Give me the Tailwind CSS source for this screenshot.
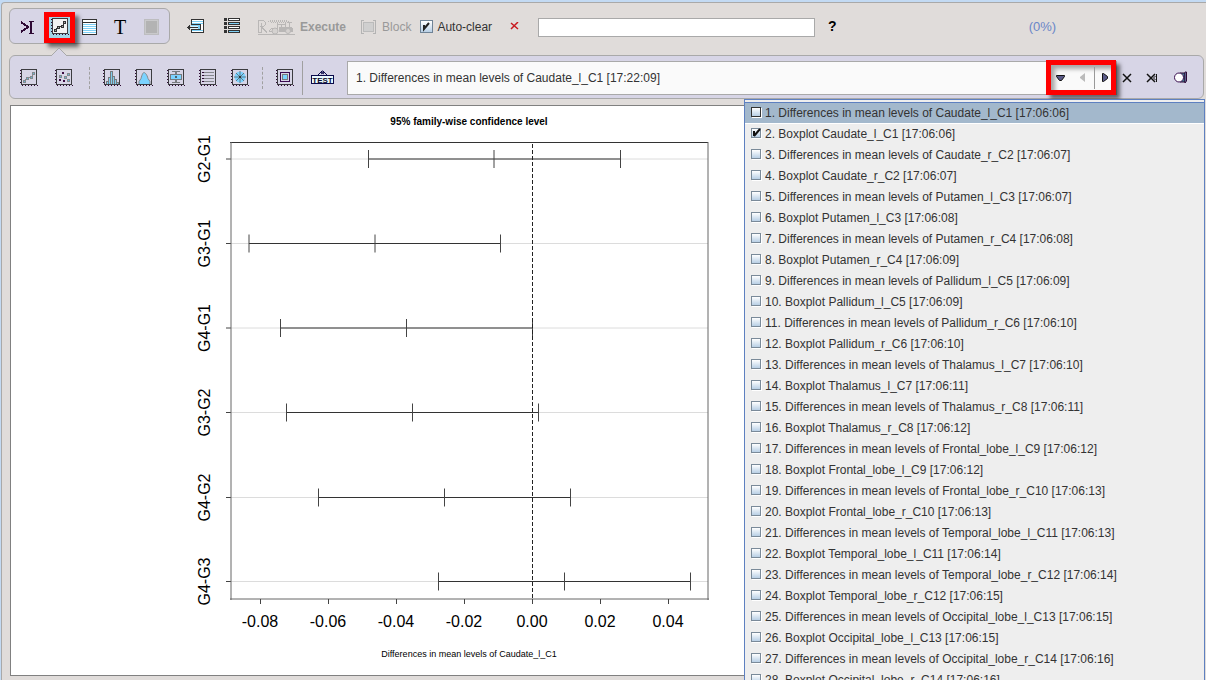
<!DOCTYPE html>
<html lang="en">
<head>
<meta charset="utf-8">
<title>Graphics viewer</title>
<script src="https://cdn.jsdelivr.net/npm/@tailwindcss/browser@4"></script>
</head>
<body class="overflow-hidden bg-[#c3daf3] font-['Liberation_Sans',Arial,sans-serif] text-xs text-[#333]">
<svg width="0" height="0" class="absolute" aria-hidden="true">
  <defs>
    <g id="frame" shape-rendering="crispEdges">
      <path d="M.5 1v15" stroke="#2f0a35" stroke-dasharray="1 2" fill="none"/>
      <path d="M2 16.500h16" stroke="#2f0a35" stroke-dasharray="1 2" fill="none"/>
      <rect x="1.500" y=".5" width="15" height="15" fill="none" stroke="#3c3c40"/>
    </g>
    <g id="steps" shape-rendering="crispEdges">
      <rect x="3.500" y="11.500" width="2" height="2"/><rect x="6.500" y="8.500" width="2" height="2"/>
      <rect x="10.500" y="7.500" width="2" height="2"/><rect x="12.500" y="3.500" width="2" height="2"/>
      <path d="M5 10.500h2M9 8.500h1M12.500 6v1" fill="none"/>
    </g>
  </defs>
</svg>

<div class="mt-[2px] ml-px min-h-[678px] overflow-hidden rounded-tl border-t border-l border-[#a9a9a9] bg-[#e0dcda] pt-[5px] pr-[2px] pl-[7px]">

  <header class="flex h-9 items-center">
    <div class="flex h-9 w-[161px] shrink-0 items-center rounded-md border border-[#a9a9a9] bg-[#d7d5e6] pt-[2px] pl-[10px]" role="toolbar" aria-label="Panels">
      <button class="w-4" aria-label="Console">
        <svg width="16" height="14" shape-rendering="crispEdges" fill="none" stroke="#2f0a35"><path d="M1 2l7 5l-7 5" stroke-width="2"/><path d="M9 1h5M9 13h5M11.500 1v12"/><path d="M11 1v12" stroke-width="2"/></svg>
      </button>
      <button class="relative ml-2 flex size-[31px] items-center justify-center border-[5px] border-[#f00] bg-[#a3d5e6] shadow-[4px_4px_4px_#0008]" aria-label="Graphics">
        <svg width="18" height="18" class="shrink-0"><rect x="2" y="1" width="14" height="14" fill="#f2f2f2"/><use href="#frame"/><use href="#steps" stroke="#333" fill="#aaa"/></svg>
      </button>
      <button class="ml-[7px]" aria-label="Table">
        <svg width="15" height="16" shape-rendering="crispEdges"><rect x=".5" y=".5" width="14" height="15" fill="#fff" stroke="#333"/><path d="M1 3.500h13" stroke="#333"/><path d="M1 5.500h13M1 7.500h13M1 9.500h13M1 11.500h13M1 13.500h13" stroke="#7fd0f5"/></svg>
      </button>
      <button class="ml-[15px] w-4 font-['Liberation_Serif',serif] text-xl leading-5 text-black" aria-label="Text">T</button>
      <button class="ml-4" aria-label="Stop" disabled>
        <svg width="15" height="16" shape-rendering="crispEdges"><rect x=".5" y=".5" width="14" height="15" fill="#c9c9cb" stroke="#bdbdbf"/><rect x="2" y="2" width="11" height="12" fill="#b3b3b3"/></svg>
      </button>
    </div>
    <button class="ml-[17px]" aria-label="Collapse">
      <svg width="17" height="14" shape-rendering="crispEdges"><rect x="4.500" y=".5" width="12" height="13" fill="#fff" stroke="#333"/><path d="M5 2.500h11M5 4.500h11M5 11.500h11" stroke="#7fd0f5"/><rect x="4" y="6" width="2" height="5" fill="#e0dcda"/><path d="M4 5.500h9v5H4" fill="#7fd0f5" stroke="#333"/><path d="M4 8.500h7" stroke="#e0f4ff" stroke-width="3"/><path d="M0 8.500h11M1.500 7v3M2.500 6v5" fill="none" stroke="#333"/></svg>
    </button>
    <button class="ml-5" aria-label="List">
      <svg width="16" height="16" shape-rendering="crispEdges"><path d="M0 1.500h3M0 5.500h3M0 9.500h3M0 13.500h3" stroke="#333" stroke-width="3"/><g stroke="#333"><rect x="4.500" y=".5" width="11" height="2" fill="#fff"/><rect x="4.500" y="4.500" width="11" height="2" fill="#7fd0f5"/><rect x="4.500" y="8.500" width="11" height="2" fill="#fff"/><rect x="4.500" y="12.500" width="11" height="2" fill="#7fd0f5"/></g></svg>
    </button>
    <button class="ml-[18px] flex items-center gap-[5px] pt-px text-xs font-bold text-[#999]" disabled>
      <svg width="37" height="16" fill="none" stroke="#b9b7b6" shape-rendering="crispEdges"><path d="M0 15.500h37"/><path d="M.5 13V1.500h5l2 2v2l-2 2H3l6 6M3 4v9H0"/><path d="M10 2.500h22M12 1.500h18M13 3.500h18" stroke-dasharray="1 1"/><path d="M19.500 4v5h-6l-2 3h3M27 4v4M20 5.500h7M23.500 5v3" /><path d="M21 8h12l2 2v3H21z" fill="#b9b7b6" stroke="none"/><g shape-rendering="auto"><circle cx="17" cy="12" r="3" fill="#d5d2d0"/><circle cx="30" cy="12" r="2.500" fill="#d5d2d0"/></g><path d="M31.500 4v4M30 3.500h4"/></svg>
      Execute
    </button>
    <button class="ml-[15px] flex items-center gap-[6px] pt-px text-xs text-[#999]" disabled>
      <svg width="15" height="14" shape-rendering="crispEdges"><rect x="2.500" y="2.500" width="10" height="9" fill="#cfcfcf" stroke="#bbb"/><path d="M3 .5H.5v13H3M12 .5h2.500v13H12" fill="none" stroke="#b3b3b3"/></svg>
      Block
    </button>
    <label class="ml-[9px] flex items-center gap-1 pt-px text-xs">
      <span class="relative flex size-[13px]">
        <input type="checkbox" checked class="size-[13px] appearance-none border border-[#6f8396] bg-linear-to-b from-white to-[#b8cfe5]">
        <svg class="pointer-events-none absolute inset-0" width="13" height="13"><path d="M4 5v4l5-6" fill="none" stroke="#222" stroke-width="2"/></svg>
      </span>
      Auto-clear
    </label>
    <button class="ml-[18px]" aria-label="Clear"><svg width="9" height="8"><path d="M1 1l7 6M8 0L1 7" stroke="#c8191e" stroke-width="1.500"/></svg></button>
    <input type="text" aria-label="Command" class="mt-[2px] ml-[19px] h-[19px] w-[277px] border border-[#a9a9a9] bg-white px-1">
    <button class="ml-[13px] text-sm font-bold text-black" aria-label="Help">?</button>
    <output class="ml-48 pt-[2px] text-[13px] text-[#6a86c8]">(0%)</output>
  </header>

  <div class="relative mt-[11px] flex h-11 items-center rounded-md border border-[#a9a9a9] bg-[#d7d5e6] pt-px pl-[10px]" role="toolbar" aria-label="Graphics">
    <svg class="absolute -top-[9px] left-10" width="18" height="10"><path d="M1 9L9 1l8 8" fill="#d7d5e6" stroke="#a9a9a9"/><path d="M2 9.500h14" stroke="#d7d5e6"/></svg>
    <button aria-label="Line plot"><svg width="18" height="18"><use href="#frame"/><use href="#steps" stroke="#85898d" fill="#65b9dc"/></svg></button>
    <button class="ml-[17px]" aria-label="Scatter plot"><svg width="18" height="18" shape-rendering="crispEdges"><use href="#frame"/><g fill="#65b9dc" stroke="#85898d"><rect x="4.500" y="6.500" width="2" height="2"/><rect x="9.500" y="7.500" width="2" height="2"/><rect x="12.500" y="4.500" width="2" height="2"/><rect x="12.500" y="10.500" width="2" height="2"/></g><path d="M7 3h2v2H7zM4 10h2v2H4zM8 11h2v2H8z" fill="#3a0a40"/></svg></button>
    <span class="ml-4 h-[22px] border-l border-dashed border-[#a0a0a0]"></span>
    <button class="ml-[13px]" aria-label="Histogram"><svg width="18" height="18" shape-rendering="crispEdges"><path d="M3.500 15v-3h2V8h2V2h2v5h2v3h2v3h2v2M5.500 15v-3M7.500 15V8M9.500 15V7M11.500 15v-5M13.500 15v-2" fill="#7fcdec" stroke="#777b7e"/><use href="#frame"/></svg></button>
    <button class="ml-[14px]" aria-label="Density plot"><svg width="18" height="18"><path d="M4 15.500v-3l2-3c1-4 2-6 3-6s3 2 4 6l2 3v3z" fill="#7bd3ff" stroke="#85898d"/><use href="#frame"/></svg></button>
    <button class="ml-[14px]" aria-label="Box plot"><svg width="18" height="18" shape-rendering="crispEdges"><use href="#frame"/><path d="M5 2.500h8M5 13.500h8M9 3v10" stroke="#777b7e" stroke-width="1.500"/><rect x="3.500" y="5.500" width="11" height="5" fill="#7bd3ff" stroke="#777b7e"/><rect x="8" y="7" width="2" height="2" fill="#4b6270"/></svg></button>
    <button class="ml-[14px]" aria-label="Dot chart"><svg width="18" height="18" shape-rendering="crispEdges"><use href="#frame"/><path d="M4 3.500h11M4 6.500h11M4 9.500h11M4 12.500h11" stroke="#85898d"/><path d="M3 3.500h2M3 6.500h2M3 9.500h2M3 12.500h2" stroke="#2f0a35"/></svg></button>
    <button class="ml-[14px]" aria-label="Star plot"><svg width="18" height="18"><circle cx="9" cy="8" r="5.500" fill="#7bd3ff"/><path d="M9 2v12M3 8h12M5 4l8 8M13 4l-8 8" stroke="#5d7a88"/><rect x="8" y="7" width="2" height="2" fill="#333"/><use href="#frame"/></svg></button>
    <span class="ml-[13px] h-[22px] border-l border-dashed border-[#a0a0a0]"></span>
    <button class="ml-[13px]" aria-label="Device"><svg width="18" height="18" shape-rendering="crispEdges"><use href="#frame"/><rect x="4.500" y="3.500" width="9" height="9" fill="#d7d5e6" stroke="#3a0a50"/><rect x="6.500" y="5.500" width="5" height="5" fill="#7bd3ff" stroke="#777b7e"/></svg></button>
    <span class="ml-2 h-[34px] border-l border-[#a0a0a0]"></span>
    <button class="ml-2" aria-label="Test"><svg width="23" height="15"><path d="M7 5l4-4h1l4 4M10 2l3 2M13 2l-3 2" fill="none" stroke="#0a0a4a"/><rect x=".5" y="5.500" width="22" height="8" fill="#eafaff" stroke="#0a0a4a" shape-rendering="crispEdges"/><text x="11.500" y="12.500" text-anchor="middle" font-family="Liberation Sans" font-weight="bold" font-size="8" fill="#0a0a2a">TEST</text></svg></button>
    <div class="ml-[13px] flex h-[34px] flex-1 items-center border border-[#a9a9a9] bg-[#fafafa]">
      <select aria-label="Plot history" class="h-full min-w-0 flex-1 appearance-none bg-transparent pl-2 text-xs text-[#333]"><option>1. Differences in mean levels of Caudate_l_C1 [17:22:09]</option></select>
      <div class="relative flex h-[35px] w-[70px] shrink-0 items-center border-[5px] border-[#f00] shadow-[4px_4px_4px_#0008,inset_4px_4px_4px_#0005]">
        <button class="ml-[5px]" aria-label="Show history"><svg width="9" height="6"><path d="M.5 .5h8v1l-3 4h-2l-3-4z" fill="#5a5a88" stroke="#111"/></svg></button>
        <button class="ml-[15px]" aria-label="Previous" disabled><svg width="6" height="9"><path d="M5 0v9L0 5V4z" fill="#bbb"/></svg></button>
        <span class="ml-2 h-[22px] border-l border-[#999]"></span>
        <button class="ml-[7px]" aria-label="Next"><svg width="6" height="9"><path d="M.5 .5h1l4 3v2l-4 3h-1z" fill="#5a5a88" stroke="#111"/></svg></button>
      </div>
    </div>
    <button class="ml-[5px]" aria-label="Remove"><svg width="10" height="10" stroke="#111" stroke-width="1.500"><path d="M1 1l8 8M9 1L1 9"/></svg></button>
    <button class="ml-[14px]" aria-label="Remove all"><svg width="12" height="10" stroke="#111" fill="none"><path d="M1 1l8 8M9 1L1 9" stroke-width="1.500"/><path d="M10.500 1v8M9.500 3l-2 2l2 2"/></svg></button>
    <button class="mr-[14px] ml-4" aria-label="Toggle view"><svg width="15" height="13"><path d="M6 2h5v9H6z" fill="#3f7a90" stroke="#2f0a35"/><path d="M11 1h1.500v9l-1.500 2z" fill="#8fb8e8" stroke="#2f0a35"/><circle cx="5" cy="6.500" r="4.500" fill="#fff" stroke="#3a1050"/></svg></button>
  </div>

  <main class="mt-[6px] ml-px h-[571px] border border-[#808080] bg-white">
    <svg id="chart" width="733" height="569" viewBox="11 106 733 569" font-family="Liberation Sans, Arial, sans-serif" fill="#000" role="img" aria-label="95% family-wise confidence level">
      <text x="469" y="125" text-anchor="middle" font-size="10" font-weight="bold">95% family-wise confidence level</text>
      <text x="469" y="657" text-anchor="middle" font-size="9">Differences in mean levels of Caudate_l_C1</text>
    </svg>
  </main>
</div>

<section class="absolute top-[99px] right-px bottom-0 left-[744px] overflow-hidden border-x border-t border-[#5e80c0] bg-[#eee] pt-[2px]" aria-label="Plot history list">
  <ul id="history" class="border-t border-[#5e80c0]"></ul>
</section>

<script>
const NS = 'http://www.w3.org/2000/svg';
const chart = document.getElementById('chart');
function add(tag, attrs, text) {
  const el = document.createElementNS(NS, tag);
  for (const k in attrs) el.setAttribute(k, attrs[k]);
  if (text) el.textContent = text;
  chart.appendChild(el);
}
function line(x1, y1, x2, y2, stroke, dash) {
  add('path', { d: `M${x1} ${y1}L${x2} ${y2}`, stroke, 'stroke-dasharray': dash || 'none', fill: 'none' });
}
const rows = [
  ['G2-G1', 159, 368.5, 494, 620.5], ['G3-G1', 243.5, 249, 375, 500.5],
  ['G4-G1', 328, 280.5, 406.5, 532.5], ['G3-G2', 412.5, 286.5, 412.5, 538.5],
  ['G4-G2', 497.5, 318.5, 444.5, 570.5], ['G4-G3', 581.5, 438.5, 564.5, 690.5]
];
for (const [name, y, lo, mid, hi] of rows) {
  line(231, y, 708, y, '#dcdcdc');
  line(226, y, 231, y, '#444');
  line(lo, y, hi, y, '#333');
  for (const x of [lo, mid, hi]) line(x, y - 9, x, y + 9, '#444');
  add('text', { transform: `translate(210 ${y}) rotate(-90)`, 'text-anchor': 'middle', 'font-size': 16 }, name);
}
line(532.5, 144, 532.5, 599, '#222', '4 2');
add('path', { d: 'M230 142.5H708', stroke: '#333' });
add('path', { d: 'M231 142V600M708 142V600M230 599H709', stroke: '#666', fill: 'none' });
['-0.08', '-0.06', '-0.04', '-0.02', '0.00', '0.02', '0.04'].forEach((t, i) => {
  line(260.5 + 68 * i, 599, 260.5 + 68 * i, 604, '#444');
  add('text', { x: 260 + 68 * i, y: 627, 'text-anchor': 'middle', 'font-size': 16 }, t);
});

const regions = [
  ['Caudate_l_C1', '06', '06'], ['Caudate_r_C2', '07', '07'], ['Putamen_l_C3', '07', '08'],
  ['Putamen_r_C4', '08', '09'], ['Pallidum_l_C5', '09', '09'], ['Pallidum_r_C6', '10', '10'],
  ['Thalamus_l_C7', '10', '11'], ['Thalamus_r_C8', '11', '12'], ['Frontal_lobe_l_C9', '12', '12'],
  ['Frontal_lobe_r_C10', '13', '13'], ['Temporal_lobe_l_C11', '13', '14'], ['Temporal_lobe_r_C12', '14', '15'],
  ['Occipital_lobe_l_C13', '15', '15'], ['Occipital_lobe_r_C14', '16', '16']
];
const items = regions.flatMap(([r, a, b]) => [`Differences in mean levels of ${r} [17:06:${a}]`, `Boxplot ${r} [17:06:${b}]`]);
document.getElementById('history').innerHTML = items.map((t, i) => `
  <li class="h-[21px] ${i === 0 ? 'border-b border-white bg-[#a3b8cc]' : ''}">
    <label class="flex h-5 items-center gap-1 pl-[6px]">
      <span class="flex pb-[2px]"><span class="relative flex size-[10px]">
        <input type="checkbox" ${i === 1 ? 'checked' : ''} class="size-[10px] appearance-none border bg-linear-to-b from-white to-[#b8cfe5] shadow-[1px_1px_0_#fff] ${i === 0 ? 'border-[#333]' : 'border-[#7a8a99]'}">
        ${i === 1 ? '<svg class="pointer-events-none absolute inset-0" width="10" height="10"><path d="M3 3v5M3 8l6-7" fill="none" stroke="#111" stroke-width="2"/></svg>' : ''}
      </span></span>
      ${i + 1}. ${t}
    </label>
  </li>`).join('');
</script>
</body>
</html>
